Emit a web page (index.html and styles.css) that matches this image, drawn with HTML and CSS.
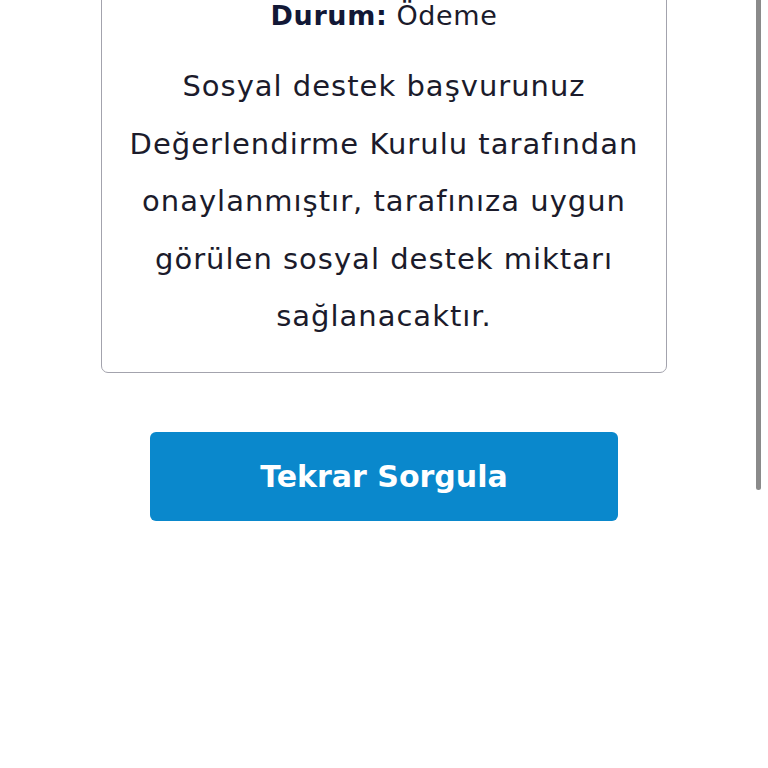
FILE: index.html
```html
<!DOCTYPE html>
<html>
<head>
    <title>Başvuru Durumu</title>
    <link rel="stylesheet" href="styles.css">
</head>
<body>
    <main class="page">
        <!-- result card, top is scrolled out of view -->
        <section class="result-card">
            <p class="status"><b>Durum:</b> Ödeme</p>
            <p class="message">
                Sosyal destek başvurunuz<br>
                Değerlendirme Kurulu tarafından<br>
                onaylanmıştır, tarafınıza uygun<br>
                görülen sosyal destek miktarı<br>
                sağlanacaktır.
            </p>
        </section>

        <button class="retry-btn" type="button">Tekrar Sorgula</button>
    </main>

    <div class="scroll-thumb"></div>
</body>
</html>
```

FILE: styles.css
```css
body {
    margin: 0;
    padding: 0;
    background-color: #ffffff;
    font-family: "DejaVu Sans", "Noto Sans", sans-serif;
    color: #1b1b2b;
    overflow: hidden;
}

.page {
    display: flex;
    flex-direction: column;
    align-items: center;
}

/** Result card **/

.result-card {
    box-sizing: border-box;
    width: 566px;
    margin-top: -40px;
    padding: 35px 10px 26px;
    border: 1.5px solid #a3a3ad;
    border-radius: 7px;
    text-align: center;
}

.status {
    margin: 0;
    font-size: 27px;
    letter-spacing: 0.6px;
    line-height: 40px;
}

.status b {
    color: #121836;
    font-weight: 700;
}

.message {
    margin: 22px 0 0;
    font-size: 29px;
    letter-spacing: 1px;
    line-height: 57.5px;
}

/** Button **/

.retry-btn {
    width: 468px;
    height: 89px;
    margin-top: 59px;
    border: none;
    border-radius: 6px;
    background-color: #0a88cc;
    color: #ffffff;
    font-family: inherit;
    font-size: 30px;
    font-weight: 700;
    cursor: pointer;
}

/* overlay scrollbar thumb */
.scroll-thumb {
    position: fixed;
    top: 0;
    right: 7px;
    width: 5px;
    height: 490px;
    border-radius: 0 0 3px 3px;
    background-color: #8a8a8a;
}
```
